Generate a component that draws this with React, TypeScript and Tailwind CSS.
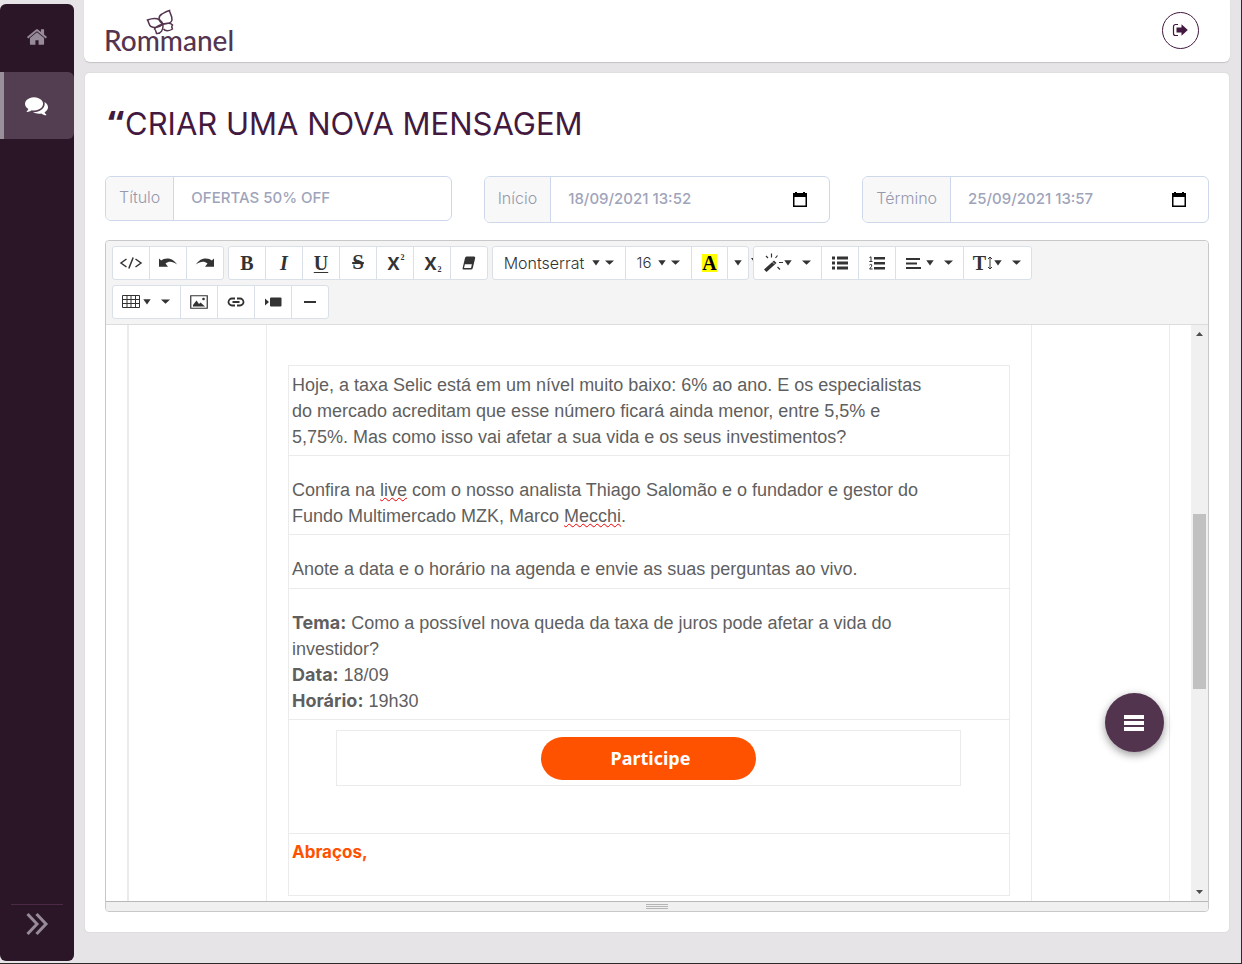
import type { ReactNode } from "react";

const BTN =
  "relative -ml-px flex h-[34px] items-center justify-center border border-[#dae0e8] bg-white text-[#333333] first:ml-0 first:rounded-l-[3px] last:rounded-r-[3px] hover:bg-gray-100";

function Group({ children }: { children: ReactNode }) {
  return <div className="flex">{children}</div>;
}

function Tool({ label, children }: { label: string; children: ReactNode }) {
  return (
    <button type="button" aria-label={label} className={`${BTN} w-[38px]`}>
      {children}
    </button>
  );
}

function MenuTool({ label, children }: { label: string; children: ReactNode }) {
  return (
    <button type="button" aria-label={label} className={`${BTN} w-[69px] pr-px`}>
      {children}
      <Caret />
      <span className="w-[10px]" />
      <WideCaret />
    </button>
  );
}

function Caret() {
  return (
    <svg width="8" height="6" viewBox="0 0 8 6" fill="currentColor" aria-hidden="true">
      <path d="M0.300 0.300h7.400L4 5.500z" />
    </svg>
  );
}

function WideCaret() {
  return (
    <svg className="-mt-[2px]" width="9" height="5" viewBox="0 0 9 5" fill="currentColor" aria-hidden="true">
      <path d="M0 0.400h9L4.500 4.800z" />
    </svg>
  );
}

function Icon({ w = 20, h = 16, children }: { w?: number; h?: number; children: ReactNode }) {
  return (
    <svg width={w} height={h} viewBox={`0 0 ${w} ${h}`} fill="currentColor" aria-hidden="true">
      {children}
    </svg>
  );
}

function UndoIcon() {
  return (
    <Icon w={20} h={10}>
      <path d="M1 .5l2.200 2C6.500-.5 14.500-1 19 6.400 14.500 3 10.500 3 7.500 5.500L10 8.800H1z" />
    </Icon>
  );
}

function RedoIcon() {
  return (
    <Icon w={20} h={10}>
      <path d="M19 .5l-2.200 2C13.500-.5 5.500-1 1 6.400 5.500 3 9.500 3 12.500 5.500L10 8.800H19z" />
    </Icon>
  );
}

function CalendarIcon() {
  return (
    <svg width="16" height="18" viewBox="0 0 16 18" aria-hidden="true">
      <path
        fill="#000"
        fillRule="evenodd"
        d="M3 1h2v1h6V1h2v1h2v14H1V2h2zM2.500 6v8.500h11V6z"
      />
    </svg>
  );
}

function Field({
  id,
  label,
  value,
  picker = false,
}: {
  id: string;
  label: string;
  value: string;
  picker?: boolean;
}) {
  return (
    <div
      className={`flex overflow-hidden rounded-md border border-[#cdd9ea] bg-white ${
        picker ? "h-[47px]" : "h-[45px]"
      }`}
    >
      <label
        htmlFor={id}
        className="flex shrink-0 items-center border-r border-[#cdd9ea] bg-[#f8f8f8] px-[13px] pb-[3px] text-[16px] font-light text-[#9699ae]"
      >
        {label}
      </label>
      <input
        id={id}
        type="text"
        defaultValue={value}
        className="min-w-0 flex-1 bg-transparent px-[17px] text-[15px] font-medium text-[#a0a4ba] outline-none"
      />
      {picker && (
        <button type="button" aria-label={`Abrir calendário: ${label}`} className="mr-[21px] shrink-0">
          <CalendarIcon />
        </button>
      )}
    </div>
  );
}

function Sidebar() {
  return (
    <aside className="mb-[2px] mt-1 flex w-[74px] shrink-0 flex-col rounded-md bg-[#2b1628]">
      <nav>
        <a
          href="#inicio"
          aria-label="Início"
          className="flex h-[68px] items-center justify-center pb-[2px] text-[#968b96]"
        >
          <svg width="22" height="22" viewBox="0 0 1792 1792" fill="currentColor" aria-hidden="true">
            <path d="M1472 992v480q0 26-19 45t-45 19h-384v-384h-256v384h-384q-26 0-45-19t-19-45v-480q0-1 .5-3t.5-3l575-474 575 474q1 2 1 6zm223-69l-62 74q-8 9-21 11h-3q-13 0-21-7l-692-577-692 577q-12 8-24 7-13-2-21-11l-62-74q-8-10-7-23.500t11-21.500l719-599q32-26 76-26t76 26l244 204v-195q0-14 9-23t23-9h192q14 0 23 9t9 23v408l219 182q10 8 11 21.500t-7 23.500z" />
          </svg>
        </a>
        <a
          href="#mensagens"
          aria-label="Mensagens"
          className="flex h-[67px] items-center justify-center rounded-r-md border-l-4 border-[#998e99] bg-[#533d50] pr-[5px] text-white"
        >
          <svg width="23" height="23" viewBox="0 0 1792 1792" fill="currentColor" aria-hidden="true">
            <path d="M1408 768q0 139-94 257t-256.500 186.500-353.500 68.500q-86 0-176-16-124 88-278 128-36 9-86 16h-3q-11 0-20.500-8t-11.500-21q-1-3-1-6.500t.5-6.500 2-6l2.500-5 3.500-5.500 4-5 4.500-5 4-4.500q5-6 23-25t26-29.500 22.500-29 25-38.500 20.500-44q-124-72-195-177t-71-224q0-139 94-257t256.500-186.500 353.500-68.500 353.500 68.500 256.500 186.500 94 257zm384 256q0 120-71 224.500t-195 176.500q10 24 20.500 44t25 38.500 22.500 29 26 29.500 23 25q1 1 4 4.500t4.500 5 4 5 3.500 5.500l2.500 5 2 6 .5 6.500-1 6.500q-3 14-13 22t-22 7q-50-7-86-16-154-40-278-128-90 16-176 16-271 0-472-132 58 4 88 4 161 0 309-45t264-129q125-92 192-212t67-254q0-77-23-152 129 71 204 178t75 230z" />
          </svg>
        </a>
      </nav>
      <button
        type="button"
        aria-label="Expandir menu"
        className="mx-[11px] mt-auto flex h-[57px] justify-center border-t border-[#4b2947] pr-px pt-[7px] text-[#968b96]"
      >
        <svg width="24" height="24" viewBox="0 0 24 24" fill="none" stroke="currentColor" strokeWidth="3" aria-hidden="true">
          <path d="M2.500 2l9.500 10-9.500 10M11.500 2l9.500 10-9.500 10" />
        </svg>
      </button>
    </aside>
  );
}

function Logo() {
  return (
    <a href="#inicio" className="relative block text-[#54344f]">
      <span className="block font-['Lato','Inter',sans-serif] text-[28px] font-medium leading-8">Rommanel</span>
      <svg
        className="absolute -top-[15px] left-[42px]"
        width="30"
        height="27"
        viewBox="0 0 30 27"
        fill="none"
        stroke="currentColor"
        strokeWidth="1.500"
        aria-hidden="true"
      >
        <path d="M17 15C12 12 12 7 16 5c3-2 5-3 7.500-3.500C23.500 4 26.500 7 26 11c-.5 3-5 4-9 4z" />
        <path d="M17 15C14 9 9 8 1.500 11 3 13 2.500 16 5 17.500 9 19.500 14 18 17 15z" />
        <path d="M17 15c-5 2-8 3-8.500 5 1.500 1 1.500 3 2 4.500C15 25 17.500 21 17 15z" />
        <path d="M17 15c4-1 8-1 9.500 1-1.500 1.500-.5 3 0 4-3.500 2.500-7.500 2-9 0" />
      </svg>
    </a>
  );
}

function Toolbar() {
  return (
    <div
      role="toolbar"
      aria-label="Formatação"
      className="flex flex-wrap gap-x-1 gap-y-[5px] rounded-t-[3px] border-b border-[#dcdcdc] bg-[#f4f4f4] py-[5px] pl-[6px] pr-[60px]"
    >
      <Group>
        <Tool label="Código">
          <Icon w={24} h={14}>
            <path
              d="M7.500 3L2 7l5.500 4M16.500 3L22 7l-5.500 4M14.200 1.500L9.800 12.500"
              fill="none"
              stroke="currentColor"
              strokeWidth="1.500"
            />
          </Icon>
        </Tool>
        <Tool label="Desfazer">
          <UndoIcon />
        </Tool>
        <Tool label="Refazer">
          <RedoIcon />
        </Tool>
      </Group>

      <Group>
        <Tool label="Negrito">
          <span className="font-['Liberation_Serif'] text-[20px] font-bold">B</span>
        </Tool>
        <Tool label="Itálico">
          <span className="font-['Liberation_Serif'] text-[20px] font-bold italic">I</span>
        </Tool>
        <Tool label="Sublinhado">
          <span className="font-['Liberation_Serif'] text-[20px] font-bold underline decoration-1 underline-offset-2">U</span>
        </Tool>
        <Tool label="Tachado">
          <span className="font-['Liberation_Serif'] text-[21px] font-bold line-through">S</span>
        </Tool>
        <Tool label="Sobrescrito">
          <span className="pl-[2px] font-['Open_Sans'] text-[18px] font-bold">X</span>
          <span className="mb-[10px] pl-px font-['Liberation_Serif'] text-[8px] font-bold">2</span>
        </Tool>
        <Tool label="Subscrito">
          <span className="pl-[2px] font-['Open_Sans'] text-[18px] font-bold">X</span>
          <span className="mt-[14px] pl-px font-['Liberation_Serif'] text-[8px] font-bold">2</span>
        </Tool>
        <Tool label="Limpar formatação">
          <Icon w={14} h={14}>
            <path d="M4.500 .5h7.500q1.500 0 1.200 1.500l-2.400 10q-.4 1.500-1.800 1.500H1.500Q.3 13.500 .6 12.300L3 2Q3.300.5 4.500.5z" />
            <path d="M2.900 8.200h7l-.9 3.800H2z" fill="#fff" />
          </Icon>
        </Tool>
      </Group>

      <Group>
        <button type="button" aria-label="Fonte" className={`${BTN} w-[134px]`}>
          <span className="mr-[8px] text-[16px] font-light">Montserrat</span>
          <Caret />
          <span className="w-[5px]" />
          <WideCaret />
        </button>
        <button type="button" aria-label="Tamanho" className={`${BTN} w-[67px]`}>
          <span className="mr-[7px] text-[15px] font-light">16</span>
          <Caret />
          <span className="w-[5px]" />
          <WideCaret />
        </button>
        <button type="button" aria-label="Cor do texto" className={`${BTN} w-[37px]`}>
          <span className="flex h-[18px] w-[15px] items-center justify-center bg-[#ffff00] font-['Liberation_Serif'] text-[20px] font-bold text-black">
            A
          </span>
        </button>
        <button type="button" aria-label="Mais cores" className={`${BTN} w-[22px]`}>
          <Caret />
          <svg
            className="absolute -right-[6px] top-[11px]"
            width="3"
            height="4"
            viewBox="0 0 3 4"
            fill="currentColor"
            aria-hidden="true"
          >
            <path d="M0 0h3v4z" />
          </svg>
        </button>
      </Group>

      <Group>
        <MenuTool label="Estilo">
          <Icon w={21} h={20}>
            <path d="M1 16.500L11 7.500l2.500 2.500L3.500 19z" />
            <path
              d="M8.500 .5v4M3 3l2 2M14.500 2.500l-2 2.500M16 9.500h4M14.500 14l2.500 2.500"
              fill="none"
              stroke="currentColor"
              strokeWidth="1.200"
            />
            <path d="M9 8.500l2.500 2.500" stroke="#fff" strokeWidth="0.700" />
          </Icon>
        </MenuTool>
        <Tool label="Lista com marcadores">
          <Icon w={16} h={14}>
            <path d="M0 0.500h3v3H0zM5 0.500h11v3H5zM0 5.500h3v3H0zM5 5.500h11v3H5zM0 10.500h3v3H0zM5 10.500h11v3H5z" />
          </Icon>
        </Tool>
        <Tool label="Lista numerada">
          <Icon w={16} h={14}>
            <path d="M5 1h11v2.500H5zM5 6h11v2.500H5zM5 11h11v2.500H5z" />
            <path
              d="M0.500 1.500L2 .8V5.500M.3 5.500h3.200M.5 9q1.300-1.200 2.300-.2 .6 1-2.200 4.200h3"
              fill="none"
              stroke="currentColor"
            />
          </Icon>
        </Tool>
        <MenuTool label="Parágrafo">
          <Icon w={21} h={13}>
            <path d="M1 1h14v2H1zM1 5.500h11v2H1zM1 10h15v2H1z" />
          </Icon>
        </MenuTool>
        <MenuTool label="Altura da linha">
          <span className="font-['Liberation_Serif'] text-[20px] font-bold">T</span>
          <Icon w={8} h={14}>
            <path d="M4 1v12M2 3l2-2 2 2M2 11l2 2 2-2" fill="none" stroke="currentColor" />
          </Icon>
        </MenuTool>
      </Group>

      <Group>
        <MenuTool label="Tabela">
          <Icon w={21} h={14}>
            <path
              d="M.5 .5h17v12H.5zM5 .5v12M9 .5v12M13.500 .5v12M.5 4.500h17M.5 8.500h17"
              fill="none"
              stroke="currentColor"
            />
          </Icon>
        </MenuTool>
        <Tool label="Imagem">
          <Icon w={18} h={14}>
            <path d="M.75 .75h16.500v12.500H.75z" fill="none" stroke="currentColor" strokeWidth="1.200" />
            <path d="M3 11.500V10l3.500-4.500L9 9l1.500-1.500L15 11.500z" />
            <circle cx="13.500" cy="4" r="1.300" />
          </Icon>
        </Tool>
        <Tool label="Link">
          <Icon w={18} h={10}>
            <path
              d="M8 1.500H5a3.500 3.500 0 000 7h3M10 1.500h3a3.500 3.500 0 010 7h-3M5.500 5h7"
              fill="none"
              stroke="currentColor"
              strokeWidth="1.800"
            />
          </Icon>
        </Tool>
        <Tool label="Vídeo">
          <Icon w={17} h={10}>
            <path d="M0 1.500L4 5 0 8.500z" />
            <rect x="5" y="0.500" width="11.500" height="9" rx="1" />
          </Icon>
        </Tool>
        <Tool label="Linha horizontal">
          <span className="h-[2px] w-3 bg-[#333333]" />
        </Tool>
      </Group>
    </div>
  );
}

const MISSPELLED = "underline decoration-[#f00000] decoration-wavy decoration-1 underline-offset-1";
const STRONG = "font-['Inter'] text-[18px] font-bold";

function Message() {
  return (
    <div className="min-w-0 flex-1 pl-[21px] pr-[21px]">
      <div className="border-l-2 border-r border-[#ebebeb] pl-[137px] pr-[137px]">
        <div className="border-x border-[#ebebeb] px-[21px] pb-[5px] pt-10 font-['Liberation_Sans'] text-[18px] leading-[26px] text-[#5f5f5f]">
          <div className="divide-y divide-[#ebebeb] border border-[#ebebeb]">
            <div className="px-[3px] pb-[5px] pt-[6px]">
              <p className="max-w-[632px]">
                Hoje, a taxa Selic está em um nível muito baixo: 6% ao ano. E os especialistas do mercado
                acreditam que esse número ficará ainda menor, entre 5,5% e 5,75%. Mas como isso vai afetar
                a sua vida e os seus investimentos?
              </p>
            </div>
            <div className="px-[3px] pb-[5px] pt-[21px]">
              <p className="max-w-[632px]">
                Confira na <span className={MISSPELLED}>live</span> com o nosso analista Thiago Salomão e o
                fundador e gestor do Fundo Multimercado MZK, Marco <span className={MISSPELLED}>Mecchi</span>.
              </p>
            </div>
            <div className="px-[3px] pb-[6px] pt-[21px]">
              <p className="max-w-[632px]">
                Anote a data e o horário na agenda e envie as suas perguntas ao vivo.
              </p>
            </div>
            <div className="px-[3px] pb-[5px] pt-[21px]">
              <p className="max-w-[632px]">
                <strong className={STRONG}>Tema:</strong> Como a possível nova queda da taxa de juros pode
                afetar a vida do investidor?
              </p>
              <p>
                <strong className={STRONG}>Data:</strong> 18/09
              </p>
              <p>
                <strong className={STRONG}>Horário:</strong> 19h30
              </p>
            </div>
            <div className="pb-[47px] pl-[47px] pr-12 pt-[10px]">
              <div className="flex justify-center border border-[#ebebeb] pb-[5px] pt-[6px]">
                <a
                  href="#participe"
                  className="flex h-[43px] w-[215px] items-center justify-center rounded-full bg-[#ff5200] pb-[2px] pl-1 font-['Noto_Sans'] text-[18px] font-bold text-white"
                >
                  Participe
                </a>
              </div>
            </div>
            <div className="px-[3px] pb-[30px] pt-[5px]">
              <p className="font-['Inter'] text-[17px] font-bold text-[#ff5200]">Abraços,</p>
            </div>
          </div>
        </div>
      </div>
    </div>
  );
}

function ScrollTrack() {
  return (
    <div className="flex w-[17px] shrink-0 flex-col items-center bg-[#f0f0f0] text-[#4d4d4d]">
      <svg className="mt-[7px]" width="7" height="4" viewBox="0 0 7 4" fill="currentColor" aria-hidden="true">
        <path d="M0 4h7L3.500 0z" />
      </svg>
      <div className="flex w-full flex-1 flex-col items-center">
        <div className="grow-[178]" />
        <div className="w-[13px] grow-[175] bg-[#c1c1c1]" />
        <div className="grow-[201]" />
      </div>
      <svg className="mb-[7px]" width="7" height="4" viewBox="0 0 7 4" fill="currentColor" aria-hidden="true">
        <path d="M0 0h7L3.500 4z" />
      </svg>
    </div>
  );
}

export default function App() {
  return (
    <div className="flex min-h-screen border-b border-r border-[#2b2b2b] bg-[#e6e4e7] font-['Inter',sans-serif]">
      <Sidebar />
      <div className="ml-[10px] mr-[11px] min-w-0 flex-1">
        <header className="flex h-[62px] items-center justify-between rounded-b-md bg-white pb-[2px] pl-[20px] pr-[31px] shadow-[0_1px_1px_rgba(0,0,0,0.15)]">
          <div className="pt-[20px]">
            <Logo />
          </div>
          <button
            type="button"
            aria-label="Sair"
            className="flex size-[37px] items-center justify-center rounded-full border border-[#43193f] pr-[2px] text-[#43193f]"
          >
            <svg width="16" height="14" viewBox="0 0 16 14" fill="currentColor" aria-hidden="true">
              <path
                d="M6 1.500H3.500a2 2 0 00-2 2v7a2 2 0 002 2H6"
                fill="none"
                stroke="currentColor"
                strokeWidth="1.200"
              />
              <path d="M4.500 4.500h5V1.200L15.800 7l-6.300 5.800V9.500h-5z" />
            </svg>
          </button>
        </header>

        <main className="mx-px mt-[11px] rounded-[4px] bg-white px-5 pb-5 pt-[33px] shadow-[0_0_1px_rgba(0,0,0,0.25)]">
          <h1 className="flex h-9 items-center gap-px pl-[3px] text-[31px] text-[#43193f]">
            <span className="font-['Open_Sans'] text-[36px] font-bold leading-9">“</span>
            CRIAR UMA NOVA MENSAGEM
          </h1>

          <form className="mt-[34px] grid grid-cols-3 items-start gap-x-8">
            <Field id="titulo" label="Título" value="OFERTAS 50% OFF" />
            <Field id="inicio" label="Início" value="18/09/2021 13:52" picker />
            <Field id="termino" label="Término" value="25/09/2021 13:57" picker />
          </form>

          <section
            aria-label="Editor de mensagem"
            className="mt-[17px] overflow-hidden rounded-[4px] border border-[#c8c8c8]"
          >
            <Toolbar />
            <div className="flex">
              <Message />
              <ScrollTrack />
            </div>
            <div className="flex h-[10px] flex-col items-center justify-center gap-px border-t border-[#b8b8b8] bg-[#f0f0f0]">
              <span className="h-px w-[22px] bg-[#b5b5b5]" />
              <span className="h-px w-[22px] bg-[#b5b5b5]" />
              <span className="h-px w-[22px] bg-[#b5b5b5]" />
            </div>
          </section>
        </main>
      </div>

      <button
        type="button"
        aria-label="Abrir opções"
        className="fixed bottom-[212px] right-[78px] flex size-[59px] items-center justify-center rounded-full bg-[#53344f] pr-[2px] text-white shadow-[0_3px_8px_rgba(0,0,0,0.4)]"
      >
        <svg width="20" height="16" viewBox="0 0 20 16" fill="currentColor" aria-hidden="true">
          <path d="M0 0h20v4H0zM0 6h20v4H0zM0 12h20v4H0z" />
        </svg>
      </button>
    </div>
  );
}
